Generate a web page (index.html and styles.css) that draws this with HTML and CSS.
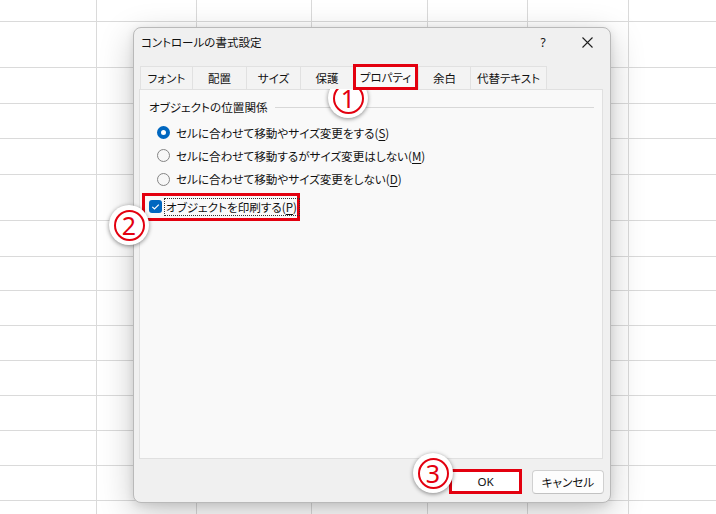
FILE: index.html
```html
<!DOCTYPE html>
<html lang="ja">
<head>
<meta charset="utf-8">
<title>コントロールの書式設定</title>
<link rel="stylesheet" href="styles.css">
</head>
<body>
<div class="sheet">
<span></span><span></span><span></span><span></span><span></span><span></span><span></span>
<span></span><span></span><span></span><span></span><span></span><span></span><span></span>
<span></span><span></span><span></span><span></span><span></span><span></span><span></span>
<span></span><span></span><span></span><span></span><span></span><span></span><span></span>
<span></span><span></span><span></span><span></span><span></span><span></span><span></span>
<span></span><span></span><span></span><span></span><span></span><span></span><span></span>
<span></span><span></span><span></span><span></span><span></span><span></span><span></span>
<span></span><span></span><span></span><span></span><span></span><span></span><span></span>
<span></span><span></span><span></span><span></span><span></span><span></span><span></span>
<span></span><span></span><span></span><span></span><span></span><span></span><span></span>
<span></span><span></span><span></span><span></span><span></span><span></span><span></span>
<span></span><span></span><span></span><span></span><span></span><span></span><span></span>
<span></span><span></span><span></span><span></span><span></span><span></span><span></span>
<span></span><span></span><span></span><span></span><span></span><span></span><span></span>
<span></span><span></span><span></span><span></span><span></span><span></span><span></span>
</div>

<div class="dialog">
  <div class="titlebar">
    <span class="title">コントロールの書式設定</span>
    <span class="help">?</span>
    <span class="close"><svg width="11" height="11" viewBox="0 0 11 11"><path d="M0.5 0.5 L10.5 10.5 M10.5 0.5 L0.5 10.5" stroke="#1f1f1f" stroke-width="1.1" fill="none"/></svg></span>
  </div>
  <div class="tabs">
    <div class="tab w52">フォント</div>
    <div class="tab w54">配置</div>
    <div class="tab w54">サイズ</div>
    <div class="tab w53">保護</div>
    <div class="tab sel">プロパティ</div>
    <div class="tab w52">余白</div>
    <div class="tab w77">代替テキスト</div>
  </div>
  <div class="panel">
    <div class="group-head"><span>オブジェクトの位置関係</span><i class="rule"></i></div>
    <div class="radios">
      <div class="radio on"><span class="dot"></span><span>セルに合わせて移動やサイズ変更をする(<u>S</u>)</span></div>
      <div class="radio"><span class="dot"></span><span>セルに合わせて移動するがサイズ変更はしない(<u>M</u>)</span></div>
      <div class="radio"><span class="dot"></span><span>セルに合わせて移動やサイズ変更をしない(<u>D</u>)</span></div>
    </div>
    <div class="check-wrap">
      <span class="box"><svg width="13" height="13" viewBox="0 0 13 13"><path d="M3.3 6.8 L5.5 9 L9.8 4.6" stroke="#fff" stroke-width="1.2" fill="none"/></svg></span>
      <span class="check-label">オブジェクトを印刷する(<u>P</u>)</span>
    </div>
  </div>
  <div class="buttons">
    <div class="btn ok">OK</div>
    <div class="btn">キャンセル</div>
  </div>
</div>

<div class="badge b1"><span>1</span></div>
<div class="badge b2"><span>2</span></div>
<div class="badge b3"><span>3</span></div>
</body>
</html>
```

FILE: styles.css
```css
html, body {
  margin: 0;
  padding: 0;
  background: #fff;
  font-family: "Noto Sans CJK JP", "Noto Sans", sans-serif;
  font-feature-settings: "palt";
  color: #111;
}

body {
  width: 716px;
  height: 514px;
  overflow: hidden;
  position: relative;
}

.sheet {
  display: grid;
  grid-template-columns: 96px 99px 114px 115px 99px 100px 1fr;
  grid-template-rows: 21px 45px 35px 34px 35px 45px 35px 33px 34px 34px 34px 34px 34px 34px 1fr;
  gap: 1px;
  background: #dadada;
  height: 514px;
}

.sheet span {
  background: #fff;
}

.dialog {
  position: absolute;
  left: 133px;
  top: 27px;
  width: 478px;
  height: 476px;
  box-sizing: border-box;
  border: 1px solid #b9b9b9;
  border-radius: 8px;
  background: #f0f0f0;
  box-shadow: 0 10px 34px rgba(0, 0, 0, 0.22), 0 2px 8px rgba(0, 0, 0, 0.1);
  display: flex;
  flex-direction: column;
}

.titlebar {
  height: 28px;
  display: flex;
  align-items: center;
  padding-left: 7px;
  font-size: 11.5px;
}

.title {
  flex: 1;
}

.help {
  width: 14px;
  text-align: center;
  margin-right: 32px;
  font-family: "Noto Sans", sans-serif;
  font-size: 12px;
}

.close {
  display: flex;
  margin-right: 17px;
}

.tabs {
  margin-top: 10px;
  margin-left: 6px;
  height: 23px;
  display: flex;
  align-items: flex-start;
  position: relative;
  z-index: 1;
}

.tab {
  box-sizing: border-box;
  height: 23px;
  border: 1px solid #e1e1e1;
  border-bottom: none;
  border-right: none;
  background: #f3f3f3;
  font-size: 11.5px;
  display: flex;
  align-items: center;
  justify-content: center;
  white-space: nowrap;
}

.w52 { width: 52px; }
.w53 { width: 53px; }
.w54 { width: 54px; }
.w77 { width: 77px; border-right: 1px solid #e1e1e1; }

.tab.sel {
  width: 65px;
  height: 26px;
  margin-top: -2px;
  border: 3px solid #e3000f;
  background: #f9f9f9;
}

.panel {
  margin-left: 5px;
  width: 464px;
  height: 370px;
  box-sizing: border-box;
  border: 1px solid #e0e0e0;
  background: #f9f9f9;
  padding: 8px 8px 0 9px;
  font-size: 11.6px;
}

.group-head {
  display: flex;
  align-items: center;
  height: 18px;
}

.rule {
  flex: 1;
  height: 1px;
  background: #d8d8d8;
  margin-left: 7px;
  margin-top: 1px;
}

.radios {
  margin-top: 5px;
  margin-left: 8px;
  display: flex;
  flex-direction: column;
}

.radio {
  height: 23.3px;
  display: flex;
  align-items: center;
  white-space: nowrap;
}

.dot {
  width: 13px;
  height: 13px;
  box-sizing: border-box;
  border: 1px solid #858585;
  border-radius: 50%;
  background: #f7f7f7;
  margin-right: 6px;
  flex: none;
}

.radio.on .dot {
  border: 4px solid #0067c0;
  background: #fff;
}

u {
  text-decoration: underline;
  text-underline-offset: 2px;
}

.check-wrap {
  margin-top: 2px;
  margin-left: -7px;
  width: 158px;
  height: 28px;
  box-sizing: border-box;
  border: 3px solid #e3000f;
  padding-left: 4px;
  display: flex;
  align-items: center;
  white-space: nowrap;
}

.box {
  width: 13px;
  height: 13px;
  border-radius: 3px;
  background: #0067c0;
  display: flex;
  flex: none;
}

.check-label {
  margin-left: 3px;
  padding: 0 2px 0 1px;
  height: 16px;
  line-height: 16px;
  outline: 1px dotted #333;
  outline-offset: 0;
}

.buttons {
  margin-top: 11px;
  display: flex;
  justify-content: flex-end;
  align-items: center;
  gap: 10px;
  padding-right: 6px;
}

.btn {
  width: 72px;
  height: 24px;
  box-sizing: border-box;
  border: 1px solid #d0d0d0;
  border-bottom-color: #c2c2c2;
  border-radius: 4px;
  background: #fdfdfd;
  font-size: 11.6px;
  display: flex;
  align-items: center;
  justify-content: center;
}

.btn.ok {
  width: 73px;
  height: 25px;
  margin-top: -2px;
  border: 3px solid #e3000f;
  border-radius: 0;
  background: #fff;
  font-family: "Noto Sans", sans-serif;
}

.badge {
  position: absolute;
  width: 40px;
  height: 40px;
  border-radius: 50%;
  background: #fff;
  box-shadow: 0 1px 4px rgba(0, 0, 0, 0.45);
  display: flex;
  align-items: center;
  justify-content: center;
}

.badge span {
  width: 31px;
  height: 31px;
  box-sizing: border-box;
  border: 2.5px solid #e3000f;
  border-radius: 50%;
  color: #e3000f;
  font-family: "Noto Sans", sans-serif;
  font-size: 25px;
  line-height: 1;
  display: flex;
  align-items: center;
  justify-content: center;
}

.b1 { left: 328px; top: 78px; }
.b2 { left: 109px; top: 205px; }
.b3 { left: 413px; top: 453px; }
```
